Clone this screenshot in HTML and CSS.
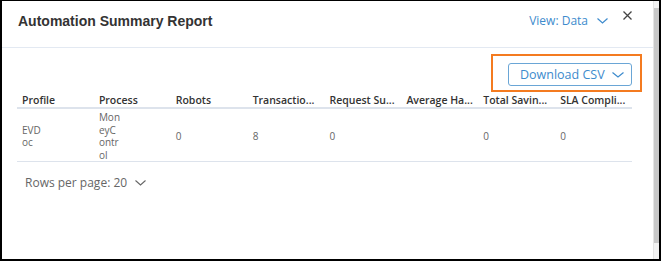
FILE: index.html
```html
<!DOCTYPE html>
<html>
<head>
  <link rel="stylesheet" href="styles.css">
  <title>Automation Summary Report</title>
</head>
<body>
  <div class="frame">
    <div class="dialog">
      <div class="header">
        <h1 class="title">Automation Summary Report</h1>
        <div class="view-toggle">
          View: Data
          <svg class="chevron" width="11" height="6" viewBox="0 0 11 6"><path d="M0.5 0.5 L5.5 5 L10.5 0.5" fill="none" stroke="#3d8bcd" stroke-width="1.2"/></svg>
        </div>
        <button class="close">
          <svg width="9" height="9" viewBox="0 0 9 9"><path d="M0.5 0.5 L8.5 8.5 M8.5 0.5 L0.5 8.5" stroke="#444" stroke-width="1.3"/></svg>
        </button>
      </div>

      <div class="toolbar">
        <div class="highlight">
          <button class="download">
            Download CSV
            <svg class="chevron" width="12" height="6" viewBox="0 0 12 6"><path d="M0.5 0.5 L6 5 L11.5 0.5" fill="none" stroke="#3d8bcd" stroke-width="1.2"/></svg>
          </button>
        </div>
      </div>

      <table class="report">
        <thead>
          <tr>
            <th>Profile</th>
            <th>Process</th>
            <th>Robots</th>
            <th>Transactio...</th>
            <th>Request Su...</th>
            <th>Average Ha...</th>
            <th>Total Savin...</th>
            <th>SLA Compli...</th>
          </tr>
        </thead>
        <tbody>
          <tr>
            <td><div class="narrow">EVDoc</div></td>
            <td><div class="narrow">MoneyControl</div></td>
            <td>0</td>
            <td>8</td>
            <td>0</td>
            <td></td>
            <td>0</td>
            <td>0</td>
          </tr>
        </tbody>
      </table>

      <div class="pager">
        Rows per page: 20
        <svg class="chevron" width="11" height="6" viewBox="0 0 11 6"><path d="M0.5 0.5 L5.5 5 L10.5 0.5" fill="none" stroke="#666" stroke-width="1.1"/></svg>
      </div>
    </div>

    <div class="scrollbar">
      <div class="thumb"></div>
    </div>
  </div>
</body>
</html>
```

FILE: styles.css
```css
/* Automation Summary Report dialog */
body {
  margin: 0;
  font-family: "Open Sans", "Liberation Sans", sans-serif;
  background-color: #fff;
}

.frame {
  display: flex;
  width: 661px;
  height: 261px;
  box-sizing: border-box;
  border-top: 1px solid #000;
  border-left: 2px solid #000;
  border-right: 2px solid #000;
  border-bottom: 2px solid #000;
  overflow: hidden;
}

.dialog {
  flex: 1;
  min-width: 0;
}

.header {
  display: flex;
  align-items: flex-start;
  height: 47px;
  box-sizing: border-box;
  padding: 10px 21px 0 16px;
  border-bottom: 1px solid #e3e9f2;
}

.title {
  margin: 0;
  flex: 1;
  font-family: "Liberation Sans", Arial, sans-serif;
  font-size: 14px;
  font-weight: 700;
  line-height: 20px;
  color: #333;
}

.view-toggle {
  display: flex;
  align-items: center;
  gap: 9px;
  line-height: 20px;
  font-size: 12px;
  color: #3d8bcd;
}

.close {
  margin: 0 0 0 15px;
  padding: 0;
  border: none;
  background: none;
  line-height: 0;
}

.toolbar {
  display: flex;
  justify-content: flex-end;
  margin: 6px 11px 0 0;
}

.highlight {
  border: 2px solid #f47b20;
  padding: 7px 8px 4px 15px;
}

.download {
  display: flex;
  align-items: center;
  gap: 7px;
  width: 124px;
  height: 23px;
  box-sizing: border-box;
  padding: 0 0 0 11px;
  border: 1px solid #6aa6d6;
  border-radius: 3px;
  background: #fff;
  font-family: "Open Sans", "Liberation Sans", sans-serif;
  font-size: 12.5px;
  color: #3d8bcd;
}

.report {
  width: 615px;
  margin-left: 15px;
  border-collapse: collapse;
  table-layout: fixed;
}

.report th {
  height: 15px;
  padding: 0 5px;
  text-align: left;
  white-space: nowrap;
  overflow: hidden;
  font-size: 10.5px;
  font-weight: 600;
  line-height: 14px;
  color: #333;
  border-bottom: 2px solid #dde3ec;
}

.report td {
  padding: 2px 5px 0;
  font-size: 10px;
  line-height: 12.5px;
  color: #666;
  vertical-align: middle;
  border-bottom: 1px solid #dde3ec;
}

.narrow {
  width: 22px;
  word-break: break-all;
}

.pager {
  display: flex;
  align-items: center;
  gap: 8px;
  margin: 13px 0 0 23px;
  font-size: 12px;
  line-height: 16px;
  color: #666;
}

.scrollbar {
  width: 5px;
  background-color: #f2f2f2;
  border-left: 1px solid #e4e4e4;
}

.thumb {
  height: 235px;
  margin-top: 7px;
  background-color: #c8c8c8;
}
```
